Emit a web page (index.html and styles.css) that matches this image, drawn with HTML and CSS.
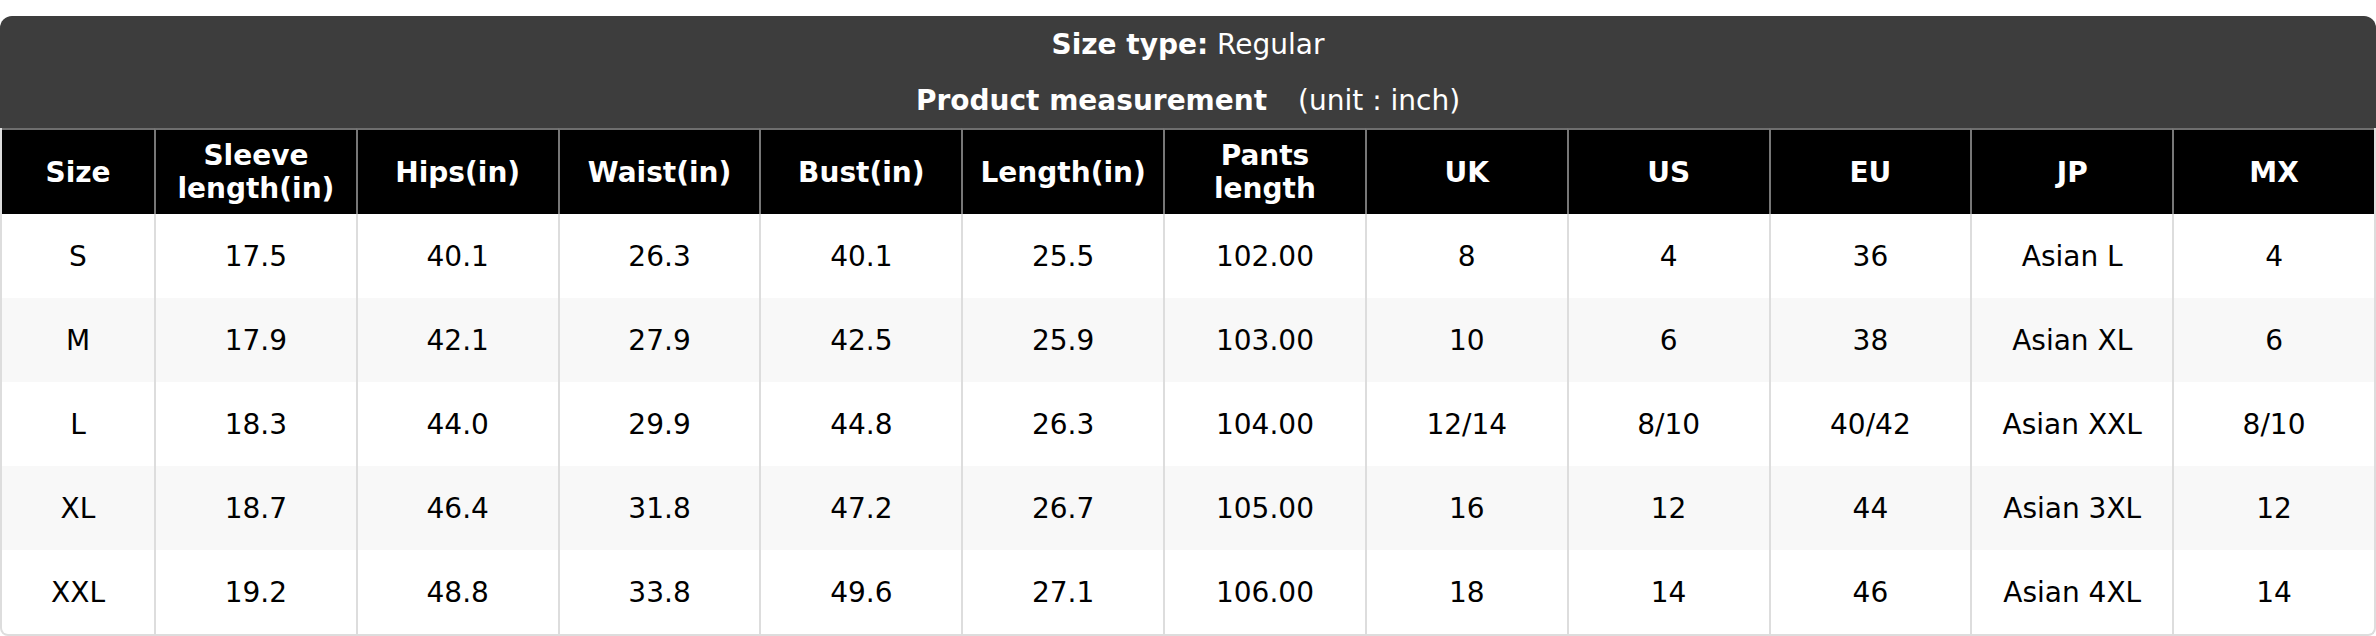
FILE: index.html
```html
<!DOCTYPE html>
<html lang="en">
<head>
<meta charset="utf-8">
<title>Size chart</title>
<link rel="stylesheet" href="styles.css">
</head>
<body>
<div class="chart">
  <div class="chart-title">
    <div class="title-line"><b>Size type:</b> Regular</div>
    <div class="title-line"><b>Product measurement</b><span class="unit">(unit : inch)</span></div>
  </div>
  <table class="size-table">
    <colgroup>
      <col class="col-size">
      <col span="11">
    </colgroup>
    <thead>
      <tr>
        <th>Size</th>
        <th>Sleeve length(in)</th>
        <th>Hips(in)</th>
        <th>Waist(in)</th>
        <th>Bust(in)</th>
        <th>Length(in)</th>
        <th>Pants length</th>
        <th>UK</th>
        <th>US</th>
        <th>EU</th>
        <th>JP</th>
        <th>MX</th>
      </tr>
    </thead>
    <tbody>
      <tr>
        <td>S</td><td>17.5</td><td>40.1</td><td>26.3</td><td>40.1</td><td>25.5</td><td>102.00</td><td>8</td><td>4</td><td>36</td><td>Asian L</td><td>4</td>
      </tr>
      <tr>
        <td>M</td><td>17.9</td><td>42.1</td><td>27.9</td><td>42.5</td><td>25.9</td><td>103.00</td><td>10</td><td>6</td><td>38</td><td>Asian XL</td><td>6</td>
      </tr>
      <tr>
        <td>L</td><td>18.3</td><td>44.0</td><td>29.9</td><td>44.8</td><td>26.3</td><td>104.00</td><td>12/14</td><td>8/10</td><td>40/42</td><td>Asian XXL</td><td>8/10</td>
      </tr>
      <tr>
        <td>XL</td><td>18.7</td><td>46.4</td><td>31.8</td><td>47.2</td><td>26.7</td><td>105.00</td><td>16</td><td>12</td><td>44</td><td>Asian 3XL</td><td>12</td>
      </tr>
      <tr>
        <td>XXL</td><td>19.2</td><td>48.8</td><td>33.8</td><td>49.6</td><td>27.1</td><td>106.00</td><td>18</td><td>14</td><td>46</td><td>Asian 4XL</td><td>14</td>
      </tr>
    </tbody>
  </table>
</div>
</body>
</html>
```
FILE: styles.css
```css
html, body {
  margin: 0;
  padding: 0;
  background: #ffffff;
}

body {
  padding-top: 16px;
  font-family: "DejaVu Sans", "Liberation Sans", sans-serif;
  font-size: 28px;
  color: #000000;
}

.chart {
  width: 2376px;
}

.chart-title {
  background: #3d3d3d;
  color: #ffffff;
  border-radius: 12px 12px 0 0;
  display: flex;
  flex-direction: column;
}

.title-line {
  height: 56px;
  display: flex;
  align-items: center;
  justify-content: center;
  white-space: pre;
}

.title-line b {
  font-weight: bold;
}

.unit {
  margin-left: 31px;
}

.size-table {
  width: 2376px;
  table-layout: fixed;
  border-collapse: separate;
  border-spacing: 0;
  border-radius: 0 0 8px 8px;
  overflow: hidden;
  border: 2px solid #dddddd;
  border-top: none;
}

.col-size {
  width: 152px;
}

.size-table th,
.size-table td {
  height: 84px;
  padding: 0 8px;
  text-align: center;
  vertical-align: middle;
  box-sizing: border-box;
}

.size-table th {
  height: 86px;
  background: #000000;
  color: #ffffff;
  font-weight: bold;
  border-top: 2px solid #6e6e6e;
  border-left: 2px solid #777777;
}

.size-table th:first-child {
  border-left: none;
}

.size-table td {
  border-left: 2px solid #dddddd;
}

.size-table td:first-child {
  border-left: none;
}

.size-table tbody tr:nth-child(even) td {
  background: #f8f8f8;
}
```
